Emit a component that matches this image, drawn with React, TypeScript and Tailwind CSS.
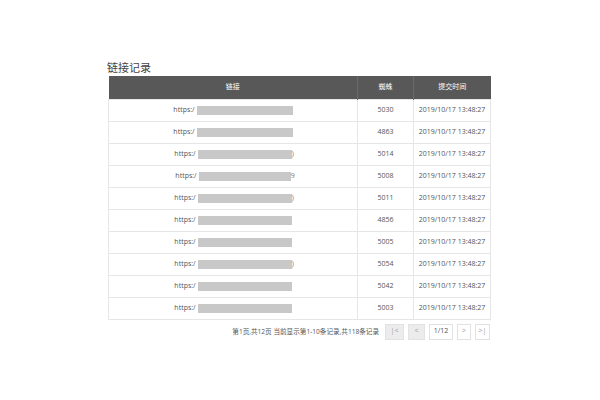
const rows = [
  { spider: '5030', bar: 96, tail: '' },
  { spider: '4863', bar: 96, tail: '' },
  { spider: '5014', bar: 94, tail: ')' },
  { spider: '5008', bar: 92, tail: '9' },
  { spider: '5011', bar: 94, tail: ')' },
  { spider: '4856', bar: 94, tail: '' },
  { spider: '5005', bar: 94, tail: '' },
  { spider: '5054', bar: 94, tail: ')' },
  { spider: '5042', bar: 94, tail: '' },
  { spider: '5003', bar: 94, tail: '' },
]

const font = { fontFamily: '"Open Sans", "Noto Sans CJK SC", sans-serif' }

export default function App() {
  return (
    <div className="w-[600px] h-[400px] bg-white text-[#555]" style={font}>
      <div className="pt-[59px] pl-[108px] w-[490px]">
        <h2 className="text-[11px] leading-[17px] text-[#444] -ml-px">链接记录</h2>
        <table className="w-[382px] border-collapse table-fixed text-[7px]">
          <colgroup>
            <col className="w-[249px]" />
            <col className="w-[56px]" />
            <col className="w-[77px]" />
          </colgroup>
          <thead>
            <tr className="h-[23px] bg-[#585858] text-white">
              <th className="font-normal border-r border-[#6a6a6a]">链接</th>
              <th className="font-normal border-r border-[#6a6a6a]">蜘蛛</th>
              <th className="font-normal">提交时间</th>
            </tr>
          </thead>
          <tbody>
            {rows.map((r, i) => (
              <tr key={i} className="h-[22px] border border-[#e6e6e6]">
                <td className="border-r border-[#e6e6e6]">
                  <div className="flex items-center justify-center pl-[4px]">
                    <span className="text-[#555] mr-[2px]">https:/</span>
                    <span className="h-[9px] bg-[#c8c8c8]" style={{ width: r.bar }} />
                    <span className="text-[#777] w-[4px]">{r.tail}</span>
                  </div>
                </td>
                <td className="text-center border-r border-[#e6e6e6]">{r.spider}</td>
                <td className="text-center">2019/10/17 13:48:27</td>
              </tr>
            ))}
          </tbody>
        </table>
        <div className="flex items-center justify-end w-[382px] mt-[4px] text-[6.6px] text-[#555]">
          <span className="mr-[6px]">第1页,共12页 当前显示第1-10条记录,共118条记录</span>
          <div className="flex gap-[4px] text-[7px]">
            <span className="w-[19px] h-[16px] flex items-center justify-center bg-[#ececec] border border-[#e2e2e2] text-[#999]">|&lt;</span>
            <span className="w-[17px] h-[16px] flex items-center justify-center bg-[#ececec] border border-[#e2e2e2] text-[#999]">&lt;</span>
            <span className="w-[24px] h-[16px] flex items-center justify-center border border-[#e2e2e2]">1/12</span>
            <span className="w-[14px] h-[16px] flex items-center justify-center border border-[#e2e2e2] text-[#999]">&gt;</span>
            <span className="w-[15px] h-[16px] flex items-center justify-center border border-[#e2e2e2] text-[#999]">&gt;|</span>
          </div>
        </div>
      </div>
    </div>
  )
}
